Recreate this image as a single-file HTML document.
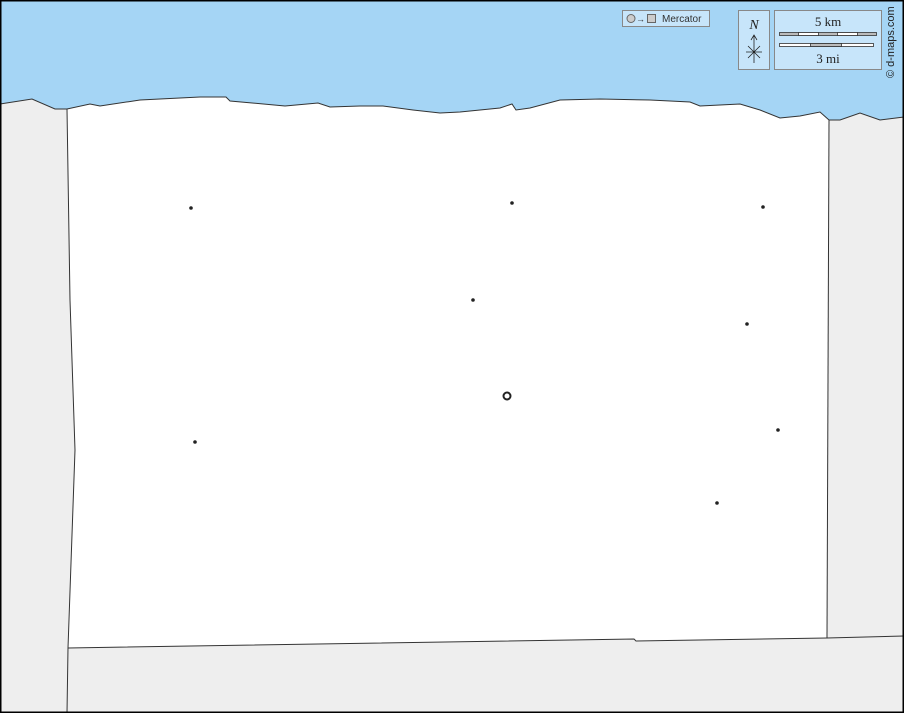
<!DOCTYPE html>
<html><head><meta charset="utf-8"><style>
html,body{margin:0;padding:0;background:#fff}
svg{display:block}
text{font-family:"Liberation Sans",sans-serif}
</style></head><body>
<svg width="904" height="713" viewBox="0 0 904 713" xmlns="http://www.w3.org/2000/svg">
<rect x="0" y="0" width="904" height="713" fill="#eeeeee"/>
<!-- white county -->
<path d="M67,109 L70,300 L75,450 L68,648 L634,639 L636,641 L827,638 L829,120 L820,112 L800,116 L780,118 L760,110 L740,104 L700,106 L690,102 L650,100 L600,99 L560,100 L530,108 L516,110 L512,104 L500,108 L460,112 L440,113 L413,110 L383,106 L360,106 L330,107 L318,103 L285,106 L230,101 L226,97 L200,97 L140,100 L100,106 L90,104 Z" fill="#fff"/>
<!-- sea -->
<path d="M0,0 L904,0 L904,117 L880,120 L860,113 L840,120 L829,120 L820,112 L800,116 L780,118 L760,110 L740,104 L700,106 L690,102 L650,100 L600,99 L560,100 L530,108 L516,110 L512,104 L500,108 L460,112 L440,113 L413,110 L383,106 L360,106 L330,107 L318,103 L285,106 L230,101 L226,97 L200,97 L140,100 L100,106 L90,104 L67,109 L55,109 L32,99 L0,104 Z" fill="#a5d5f5"/>
<path d="M0,104 L32,99 L55,109 L67,109 L90,104 L100,106 L140,100 L200,97 L226,97 L230,101 L285,106 L318,103 L330,107 L360,106 L383,106 L413,110 L440,113 L460,112 L500,108 L512,104 L516,110 L530,108 L560,100 L600,99 L650,100 L690,102 L700,106 L740,104 L760,110 L780,118 L800,116 L820,112 L829,120 L840,120 L860,113 L880,120 L904,117" fill="none" stroke="#333" stroke-width="1"/>
<path d="M67,109 L70,300 L75,450 L68,648 L67,713" fill="none" stroke="#333"/>
<path d="M829,120 L827,638" fill="none" stroke="#333"/>
<path d="M68,648 L634,639 L636,641 L827,638 L904,636" fill="none" stroke="#333"/>
<!-- dots -->
<g fill="#222">
<circle cx="191" cy="208" r="1.8"/><circle cx="512" cy="203" r="1.8"/><circle cx="763" cy="207" r="1.8"/>
<circle cx="473" cy="300" r="1.8"/><circle cx="747" cy="324" r="1.8"/><circle cx="195" cy="442" r="1.8"/>
<circle cx="778" cy="430" r="1.8"/><circle cx="717" cy="503" r="1.8"/>
</g>
<circle cx="507" cy="396" r="3.5" fill="none" stroke="#222" stroke-width="2"/>
<!-- legend -->
<rect x="622.5" y="10.5" width="87" height="16" fill="#c7e5fa" stroke="#888"/>
<circle cx="631" cy="18.5" r="4" fill="#ccc" stroke="#666"/>
<text x="636" y="22" font-size="9" fill="#333">→</text>
<rect x="647.5" y="14.5" width="8" height="8" fill="#ccc" stroke="#666"/>
<text x="662" y="22" font-size="10" fill="#333">Mercator</text>
<rect x="738.5" y="10.5" width="31" height="59" fill="#c7e5fa" stroke="#888"/>
<text x="754" y="29" font-size="14" font-style="italic" text-anchor="middle" font-family="Liberation Serif" style="font-family:'Liberation Serif',serif" fill="#222">N</text>
<path d="M754,63 L754,35 M751,40 L754,35 L757,40 M746,52 L762,52 M748,46 L760,58 M760,46 L748,58" stroke="#222" stroke-width="0.8" fill="none"/>
<rect x="774.5" y="10.5" width="107" height="59" fill="#c7e5fa" stroke="#888"/>
<text x="828" y="26" font-size="13" text-anchor="middle" style="font-family:'Liberation Serif',serif" fill="#222">5 km</text>
<text x="828" y="63" font-size="13" text-anchor="middle" style="font-family:'Liberation Serif',serif" fill="#222">3 mi</text>
<rect x="779.5" y="32.5" width="97" height="3" fill="#bbb" stroke="#333" stroke-width="0.8"/>
<rect x="798.5" y="32.5" width="20" height="3" fill="#fff" stroke="#333" stroke-width="0.8"/>
<rect x="837.5" y="32.5" width="20" height="3" fill="#fff" stroke="#333" stroke-width="0.8"/>
<rect x="779.5" y="43.5" width="94" height="3" fill="#fff" stroke="#333" stroke-width="0.8"/>
<rect x="810.5" y="43.5" width="31" height="3" fill="#bbb" stroke="#333" stroke-width="0.8"/>
<text transform="translate(894,78) rotate(-90)" font-size="11" fill="#222">© d-maps.com</text>
<rect x="0.5" y="0.5" width="903" height="712" fill="none" stroke="#000" stroke-width="2"/>
</svg>
</body></html>
